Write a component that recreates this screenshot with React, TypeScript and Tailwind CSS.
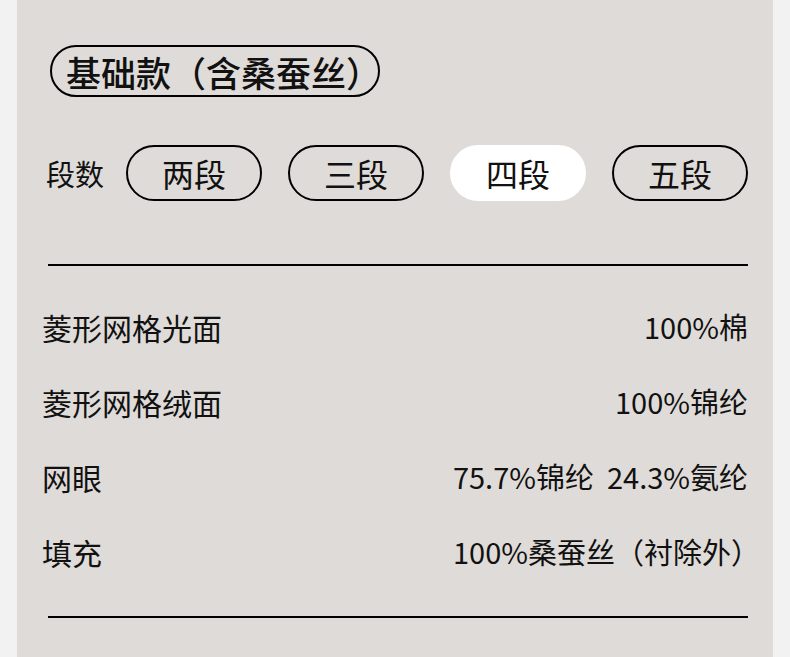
const segments = ['两段', '三段', '四段', '五段'];

const specs = [
  { label: '菱形网格光面', value: '100%棉' },
  { label: '菱形网格绒面', value: '100%锦纶' },
  { label: '网眼', value: '75.7%锦纶\u00a0\u00a024.3%氨纶' },
  { label: '填充', value: '100%桑蚕丝（衬除外', tail: '）' },
];

export default function App() {
  const active = '四段';

  return (
    <div
      className="w-[790px] h-[657px] bg-[#f2f2f2] px-[17px] text-[#111]"
      style={{ fontFamily: '"Noto Sans CJK SC", "Noto Sans", sans-serif' }}
    >
      <div className="h-full bg-[#dfdbd8] px-[25px] pt-[45px]">
        {/* title */}
        <div className="ml-[8px] w-[330px] h-[52px] border-2 border-black rounded-full flex items-center pl-[14px] whitespace-nowrap">
          <span className="text-[35px] font-medium leading-none">基础款（含桑蚕丝）</span>
        </div>

        {/* segment selector */}
        <div className="mt-[48px] ml-[4px] flex items-center">
          <span className="text-[29px] leading-none mr-[22px]">段数</span>
          <div className="flex gap-[26px]">
            {segments.map((s) => (
              <button
                key={s}
                className={
                  s === active
                    ? 'w-[136px] h-[56px] rounded-full bg-white border-2 border-white flex items-center justify-center text-[32px] leading-none'
                    : 'w-[136px] h-[56px] rounded-full border-2 border-black flex items-center justify-center text-[32px] leading-none'
                }
              >
                {s}
              </button>
            ))}
          </div>
        </div>

        <div className="mt-[63px] ml-[6px] h-[2px] bg-black" />

        <div className="mt-[23px]">
          {specs.map((row) => (
            <div key={row.label} className="h-[75px] flex items-center justify-between leading-none">
              <span className="text-[30px]">{row.label}</span>
              <span className="text-[29px] whitespace-nowrap">
                {row.value}
                {row.tail && <span className="mr-[-12px]">{row.tail}</span>}
              </span>
            </div>
          ))}
        </div>

        <div className="mt-[27px] ml-[6px] h-[2px] bg-black" />
      </div>
    </div>
  );
}
